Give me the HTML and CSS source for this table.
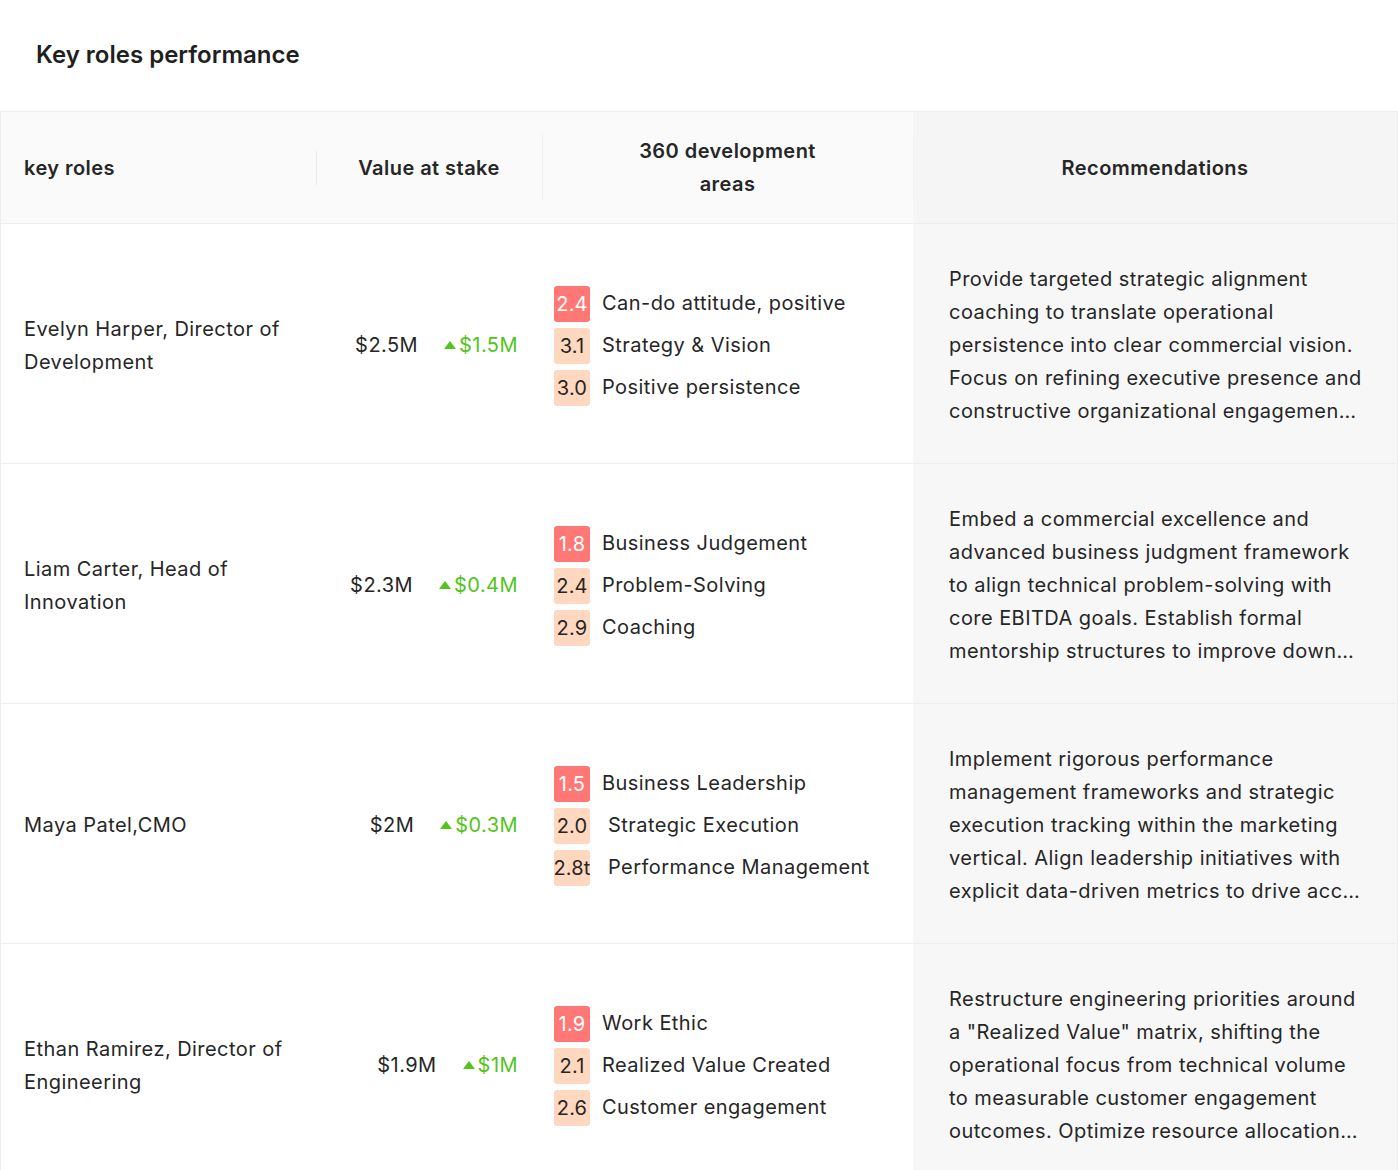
FILE: index.html
```html
<!DOCTYPE html>
<html lang="en">
<head>
<meta charset="utf-8">
<title>Key roles performance</title>
<link rel="stylesheet" href="styles.css">
</head>
<body>
<div class="card">
  <h1 class="card-title">Key roles performance</h1>
  <table class="roles">
    <colgroup>
      <col class="c-role">
      <col class="c-value">
      <col class="c-areas">
      <col class="c-rec">
    </colgroup>
    <thead>
      <tr>
        <th class="th-role">key roles</th>
        <th class="th-center th-short">Value at stake</th>
        <th class="th-center th-tall">360 development<br>areas</th>
        <th class="th-center th-tall th-rec">Recommendations</th>
      </tr>
    </thead>
    <tbody>
      <tr>
        <td class="role">Evelyn Harper, Director of Development</td>
        <td class="value"><div class="value-wrap"><span>$2.5M</span><span class="delta"><i class="tri"></i>$1.5M</span></div></td>
        <td class="areas">
          <ul class="area-list">
            <li><span class="badge red">2.4</span><span>Can-do attitude, positive</span></li>
            <li><span class="badge peach">3.1</span><span>Strategy &amp; Vision</span></li>
            <li><span class="badge peach">3.0</span><span>Positive persistence</span></li>
          </ul>
        </td>
        <td class="rec"><p class="rec-text">Provide targeted strategic alignment coaching to translate operational persistence into clear commercial vision. Focus on refining executive presence and constructive organizational engagement to accelerate leadership readiness across the wider business.</p></td>
      </tr>
      <tr>
        <td class="role">Liam Carter, Head of Innovation</td>
        <td class="value"><div class="value-wrap"><span>$2.3M</span><span class="delta"><i class="tri"></i>$0.4M</span></div></td>
        <td class="areas">
          <ul class="area-list">
            <li><span class="badge red">1.8</span><span>Business Judgement</span></li>
            <li><span class="badge peach">2.4</span><span>Problem-Solving</span></li>
            <li><span class="badge peach">2.9</span><span>Coaching</span></li>
          </ul>
        </td>
        <td class="rec"><p class="rec-text">Embed a commercial excellence and advanced business judgment framework to align technical problem-solving with core EBITDA goals. Establish formal mentorship structures to improve down&shy;stream coaching capability across the innovation team.</p></td>
      </tr>
      <tr>
        <td class="role">Maya Patel,CMO</td>
        <td class="value"><div class="value-wrap"><span>$2M</span><span class="delta"><i class="tri"></i>$0.3M</span></div></td>
        <td class="areas">
          <ul class="area-list">
            <li><span class="badge red">1.5</span><span>Business Leadership</span></li>
            <li><span class="badge peach">2.0</span><span class="indent">Strategic Execution</span></li>
            <li><span class="badge peach">2.8t</span><span class="indent">Performance Management</span></li>
          </ul>
        </td>
        <td class="rec"><p class="rec-text">Implement rigorous performance management frameworks and strategic execution tracking within the marketing vertical. Align leadership initiatives with explicit data-driven metrics to drive acc&shy;ount&shy;ability and measurable growth outcomes.</p></td>
      </tr>
      <tr>
        <td class="role">Ethan Ramirez, Director of Engineering</td>
        <td class="value"><div class="value-wrap"><span>$1.9M</span><span class="delta"><i class="tri"></i>$1M</span></div></td>
        <td class="areas">
          <ul class="area-list">
            <li><span class="badge red">1.9</span><span>Work Ethic</span></li>
            <li><span class="badge peach">2.1</span><span>Realized Value Created</span></li>
            <li><span class="badge peach">2.6</span><span>Customer engagement</span></li>
          </ul>
        </td>
        <td class="rec"><p class="rec-text">Restructure engineering priorities around a "Realized Value" matrix, shifting the operational focus from technical volume to measurable customer engagement outcomes. Optimize resource allocation to reward delivery of realized value.</p></td>
      </tr>
    </tbody>
  </table>
</div>
</body>
</html>
```

FILE: styles.css
```css
* { box-sizing: border-box; }

html, body {
  margin: 0;
  padding: 0;
  background: #ffffff;
}

body {
  font-family: Inter, "Noto Sans", "Liberation Sans", sans-serif;
  color: #262626;
  font-size: 20px;
  line-height: 33px;
}

.card {
  width: 1398px;
}

.card-title {
  margin: 0;
  padding: 37px 36px 38px;
  font-size: 24px;
  line-height: 36px;
  font-weight: 600;
  color: #1f1f1f;
}

.roles {
  width: 1398px;
  table-layout: fixed;
  border-collapse: separate;
  border-spacing: 0;
  border: 1px solid #eeeeee;
  border-bottom: none;
  letter-spacing: 0.45px;
}

.c-role { width: 315px; }
.c-value { width: 226px; }
.c-areas { width: 371px; }
.c-rec { width: 484px; }

.roles th {
  position: relative;
  background: #fafafa;
  font-weight: 600;
  font-size: 20px;
  line-height: 33px;
  color: #262626;
  padding: 23px 16px 22px;
  height: 112px;
  border-bottom: 1px solid #eeeeee;
  vertical-align: middle;
}

.roles th.th-role {
  text-align: left;
  padding-left: 23px;
}

.roles th.th-center { text-align: center; }

.roles th.th-rec { background: #f5f5f5; }

/* header column dividers */
.th-short::before,
.th-tall::before {
  content: "";
  position: absolute;
  left: 0;
  top: 50%;
  width: 1px;
  height: 34px;
  margin-top: -17px;
  background: #ebebeb;
}

.th-tall::after {
  content: "";
  position: absolute;
  left: 0;
  top: 50%;
  width: 1px;
  height: 66px;
  margin-top: -34px;
  background: #f2f2f2;
}

.roles td {
  padding: 39px 0 35px;
  border-bottom: 1px solid #eeeeee;
  vertical-align: middle;
  font-size: 20px;
  line-height: 33px;
}

.roles td.role {
  padding-left: 23px;
  padding-right: 24px;
}

.roles td.value {
  padding-right: 24px;
}

.value-wrap {
  display: flex;
  justify-content: flex-end;
  align-items: center;
  gap: 26px;
  white-space: nowrap;
}

.delta {
  display: inline-flex;
  align-items: center;
  gap: 3px;
  color: #52c41a;
}

.tri {
  display: inline-block;
  width: 0;
  height: 0;
  border-left: 6px solid transparent;
  border-right: 6px solid transparent;
  border-bottom: 8px solid #52c41a;
  margin-top: -2px;
}

.roles td.areas {
  padding-left: 12px;
  padding-right: 8px;
}

.area-list {
  list-style: none;
  margin: 0;
  padding: 0;
  display: flex;
  flex-direction: column;
  gap: 6px;
}

.area-list li {
  display: flex;
  align-items: center;
  gap: 12px;
  white-space: nowrap;
}

.badge {
  flex: 0 0 36px;
  width: 36px;
  height: 36px;
  border-radius: 3px;
  display: flex;
  justify-content: center;
  align-items: center;
  line-height: 36px;
  font-size: 20px;
  letter-spacing: 0.2px;
}

.badge.red {
  background: #ff7875;
  color: #ffffff;
}

.badge.peach {
  background: #ffd8bf;
  color: #262626;
}

.indent { padding-left: 6px; }

.roles td.rec {
  background: #f7f7f7;
  padding-left: 36px;
  padding-right: 35px;
}

.rec-text {
  margin: 0;
  display: -webkit-box;
  -webkit-box-orient: vertical;
  -webkit-line-clamp: 5;
  overflow: hidden;
  -webkit-hyphenate-character: "\200B";
  hyphenate-character: "\200B";
}
```
